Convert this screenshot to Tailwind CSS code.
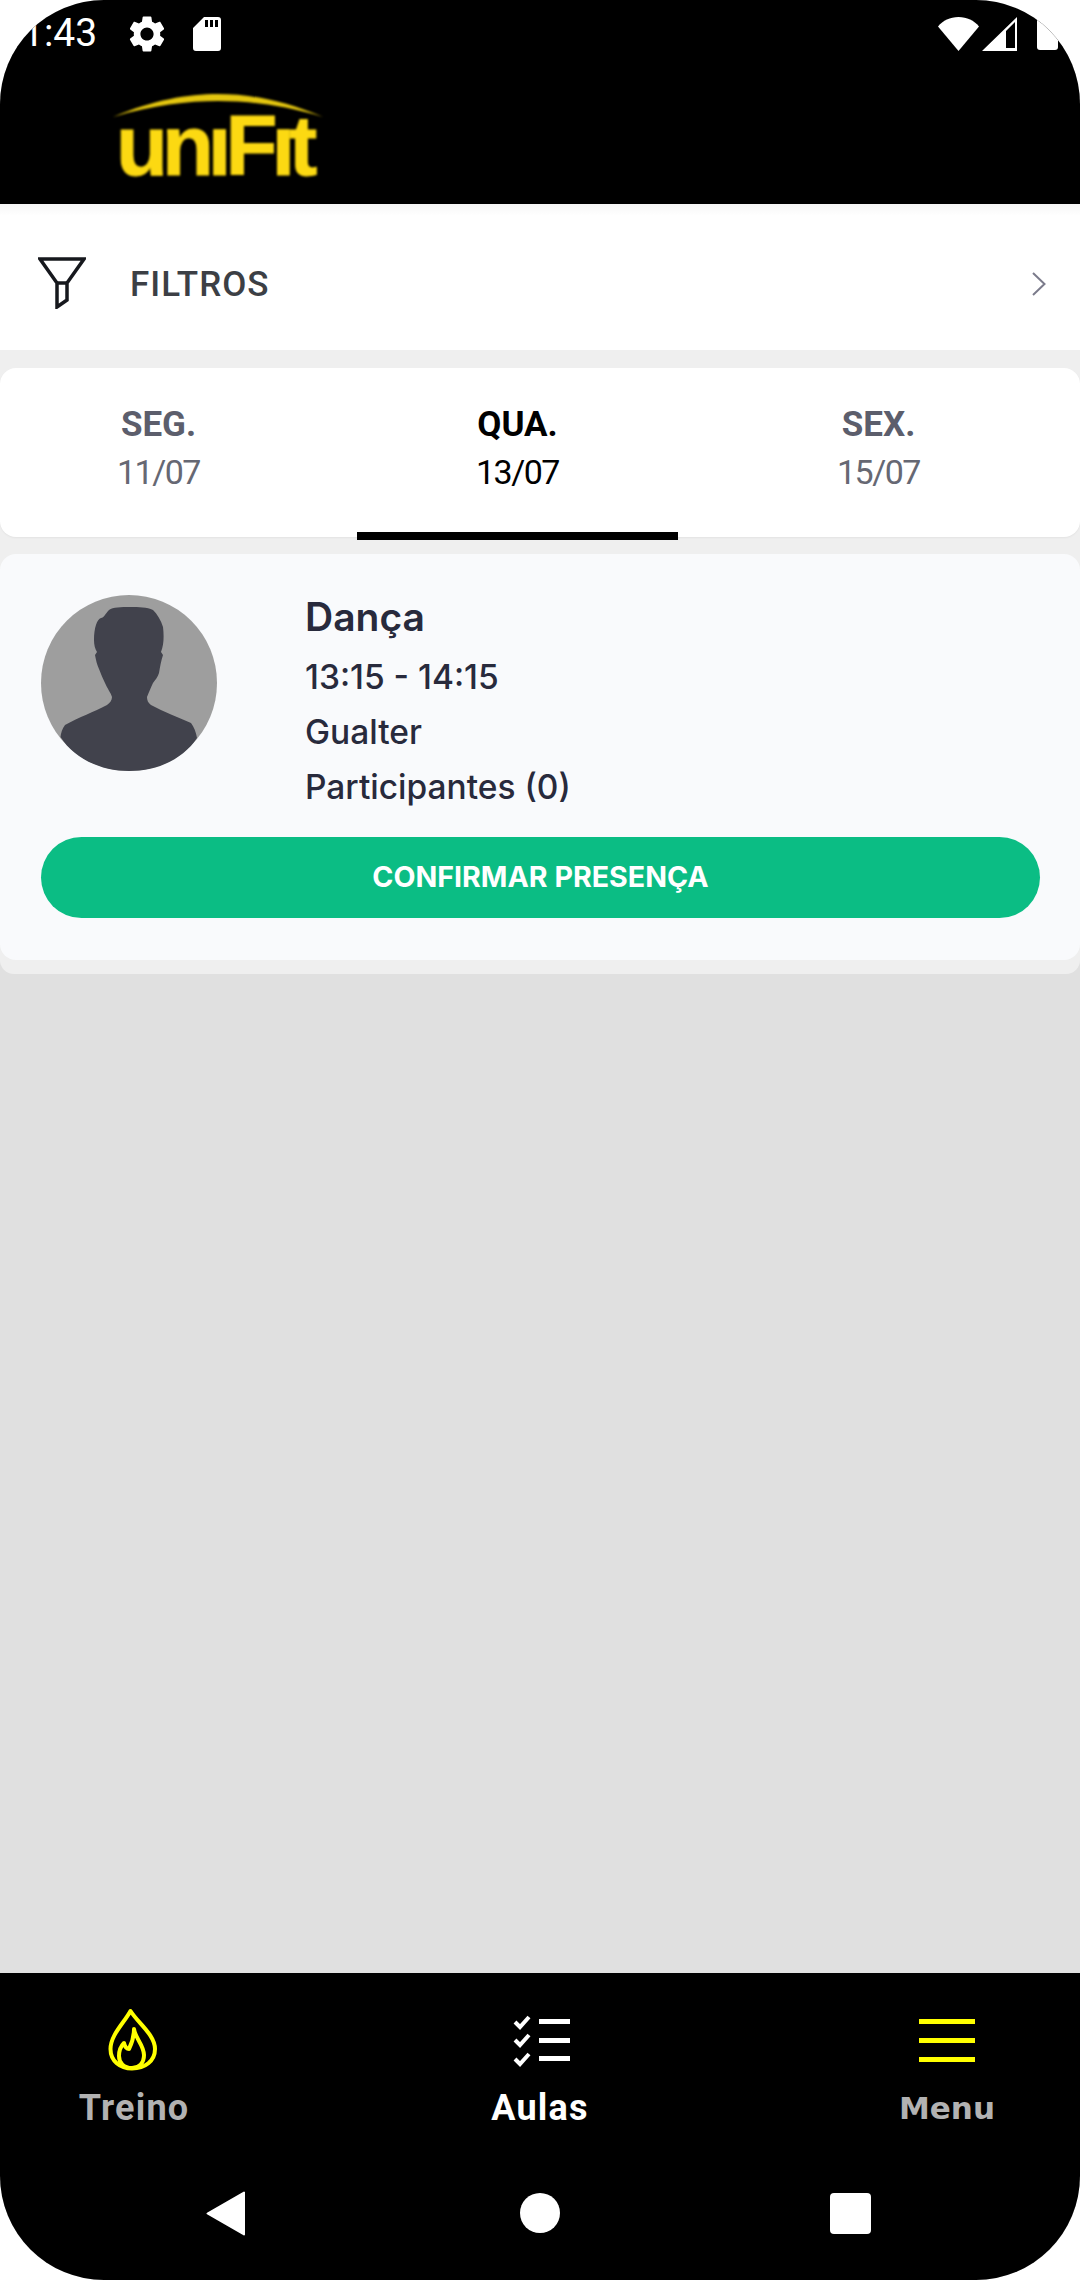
<!DOCTYPE html>
<html><head><meta charset="utf-8"><script src="https://cdn.jsdelivr.net/npm/@tailwindcss/browser@4"></script></head>
<body class="bg-white">
<div class="w-[1080px] h-[2280px] flex flex-col overflow-hidden rounded-[104px] bg-[#e0e0e0] font-['Roboto',sans-serif]">
  <!-- header -->
  <header class="h-[204px] shrink-0 bg-black flex flex-col">
    <div class="h-[67px] flex items-center justify-between pl-[22px] pr-[22px] text-white">
      <div class="flex items-center">
        <span class="text-[39px] leading-none w-[73px] text-right">1:43</span>
        <svg class="w-[44px] h-[44px] ml-[30px]" viewBox="0 0 24 24" fill="#fff"><path d="M19.14 12.94c.04-.3.06-.61.06-.94 0-.32-.02-.64-.07-.94l2.03-1.58c.18-.14.23-.41.12-.61l-1.92-3.32c-.12-.22-.37-.29-.59-.22l-2.39.96c-.5-.38-1.03-.7-1.62-.94l-.36-2.54c-.04-.24-.24-.41-.48-.41h-3.84c-.24 0-.43.17-.47.41l-.36 2.54c-.59.24-1.13.57-1.62.94l-2.39-.96c-.22-.08-.47 0-.59.22L2.74 8.87c-.12.21-.08.47.12.61l2.03 1.58c-.05.3-.09.63-.09.94s.02.64.07.94l-2.03 1.58c-.18.14-.23.41-.12.61l1.92 3.32c.12.22.37.29.59.22l2.39-.96c.5.38 1.03.7 1.62.94l.36 2.54c.05.24.24.41.48.41h3.84c.24 0 .44-.17.47-.41l.36-2.54c.59-.24 1.13-.56 1.62-.94l2.39.96c.22.08.47 0 .59-.22l1.92-3.32c.12-.22.07-.47-.12-.61l-2.01-1.58zM12 15.6c-1.98 0-3.6-1.62-3.6-3.6s1.62-3.6 3.6-3.6 3.6 1.62 3.6 3.6-1.62 3.6-3.6 3.6z"/></svg>
        <svg class="w-[28px] h-[34px] ml-[24px]" viewBox="0 0 28 34"><path fill="#fff" fill-rule="evenodd" d="M11 0H25a3 3 0 0 1 3 3V31a3 3 0 0 1-3 3H3a3 3 0 0 1-3-3V11ZM12 3v7h3V3ZM17 3v7h3V3ZM22 3v7h3V3Z"/></svg>
      </div>
      <div class="flex items-center">
        <svg class="w-[41px] h-[34px]" viewBox="0 0 41 34" fill="#fff"><path d="M0 9.5C5 3.500 12 0 20.500 0S36 3.500 41 9.500L20.500 34Z"/></svg>
        <svg class="w-[35px] h-[34px] ml-[3px]" viewBox="0 0 35 34"><path fill="#fff" fill-rule="evenodd" d="M35 0V34H0ZM33 5 24 14V31H33Z"/></svg>
        <div class="w-[21px] h-[50px] -mt-[17px] ml-[20px] bg-white rounded-b-[3px]"></div>
      </div>
    </div>
    <div class="pl-[113px] pt-[27px]">
      <div class="relative w-[210px] h-[81px] blur-[0.8px]">
        <svg class="absolute left-0 top-0 w-[210px] h-[24px]" viewBox="0 0 210 24"><path fill="#e4c60f" d="M0 23C40 6 75 0 105 0S170 6 210 23C170 11 135 7 105 7S40 11 0 23Z"/></svg>
        <span class="absolute left-[3px] top-[10px] font-['Liberation_Sans',sans-serif] font-bold text-[85px] leading-[84px] tracking-[-6px] text-[#fcd912] [-webkit-text-stroke:1px_#fcd912] whitespace-nowrap">unıFıt</span>
      </div>
    </div>
  </header>

  <!-- filters -->
  <div class="h-[146px] shrink-0 bg-gradient-to-b from-[#f6f6f6] via-white via-[8%] to-white flex items-center pl-[38px] pr-[34px] pt-[14px]">
    <svg class="w-[48px] h-[52px] -mt-[3px]" viewBox="0 0 48 52" fill="none" stroke="#16181d" stroke-width="3.500"><path d="M2 2H46L29 26V43L19 50V26Z"/><path d="M19 26H29"/></svg>
    <span class="ml-[44px] text-[35px] tracking-[1px] font-medium leading-none text-[#3c3f45]">FILTROS</span>
    <svg class="w-[14px] h-[24px] ml-auto" viewBox="0 0 14 24" fill="none" stroke="#7b7b8b" stroke-width="2"><path d="M1 1L12.500 12L1 23"/></svg>
  </div>

  <!-- content -->
  <main class="h-[624px] shrink-0 bg-[#efefef] pt-[18px] rounded-b-[14px]">
    <div class="relative h-[169px] bg-white rounded-[16px] grid grid-cols-[317px_321px_321px] gap-x-[40px] pt-[38px] shadow-[0_1px_2px_rgba(0,0,0,0.05)]">
      <div class="flex flex-col items-center text-[#5c5e6c]">
        <span class="text-[35px] font-bold leading-[38px]">SEG.</span>
        <span class="text-[34px] tracking-[-1.5px] font-normal leading-[38px] mt-[9px] text-[#666873]">11/07</span>
      </div>
      <div class="relative h-[131px] flex flex-col items-center text-black">
        <span class="text-[35px] font-bold leading-[38px]">QUA.</span>
        <span class="text-[34px] tracking-[-1.5px] font-normal leading-[38px] mt-[9px]">13/07</span>
        <div class="absolute left-0 right-0 bottom-[-3px] h-[8px] bg-black"></div>
      </div>
      <div class="flex flex-col items-center text-[#5c5e6c]">
        <span class="text-[35px] font-bold leading-[38px]">SEX.</span>
        <span class="text-[34px] tracking-[-1.5px] font-normal leading-[38px] mt-[9px] text-[#666873]">15/07</span>
      </div>
    </div>

    <div class="mt-[17px] h-[406px] bg-[#f9fafc] rounded-[16px] px-[40px] pt-[41px]">
      <div class="flex pl-[1px]">
        <svg class="w-[176px] h-[176px] shrink-0" viewBox="0 0 176 176"><circle cx="88" cy="88" r="88" fill="#9e9e9e"/><path fill="#41424c" d="M89 12C80 12 72 12 68 15C64 19 63 23 60 23C56 24 53 33 53 45C53 50 54 54 56 57L54 60C55 65 56 70 58 74C60 79 62 84 64 88C66 93 70 98 71 102C71 105 69 108 66 110C53 117 38 122 24 130C21 134 20 138 19.500 142C33 163 59 176 88 176C117 176 142 164 156 143C155 137 153 132 150 128C137 122 123 117 110 110C107 108 106 105 106 102C108 97 110 92 112 88C114 85 117 82 118 78C119 72 120 66 122 60L120 57C123 50 123 40 122 32C120 25 116 19 112 15C106 12 98 12 89 12Z"/></svg>
        <div class="ml-[88px] text-[#282a3c] font-['Inter',sans-serif]">
          <div class="text-[39px] font-semibold leading-[44px]">Dança</div>
          <div class="text-[33.500px] font-medium leading-[40px] mt-[18px]">13:15 - 14:15</div>
          <div class="text-[33.500px] font-medium leading-[40px] mt-[15px]">Gualter</div>
          <div class="text-[33.500px] font-medium leading-[40px] mt-[15px]">Participantes (0)</div>
        </div>
      </div>
      <div class="ml-[1px] mt-[30px] h-[81px] rounded-full bg-[#0bbd84] flex items-center justify-center text-white font-['Inter',sans-serif] font-bold text-[28.600px]">CONFIRMAR PRESENÇA</div>
    </div>
  </main>

  <div class="flex-1"></div>

  <!-- bottom nav -->
  <nav class="h-[307px] shrink-0 bg-black flex flex-col">
    <div class="relative h-[155px]">
      <div class="grid grid-cols-3 h-full">
        <div class="relative flex flex-col items-center">
          <svg class="absolute left-[105px] top-[32px] w-[56px] h-[70px]" viewBox="0 0 56 70" fill="none" stroke="#ffff00" stroke-width="4" stroke-linejoin="round"><path d="M25.500 6C19 18 5.500 30 5.500 44C5.500 56 15 63.500 27 63.500C40 63.500 50 56 50 44C50 30 33 18 25.500 6Z"/><path d="M29 24C30 33 39 40 39 50C39 58 34 63 27 63C19 63 14 58 14 51C14 46 16 41 19 38C20 42 22 44 24 44C27 38 29 31 29 24Z"/></svg>
          <span class="absolute left-0 w-[268px] text-center top-[115px] text-[36px] tracking-[1.2px] font-bold leading-[40px] text-[#b2b2b2]">Treino</span>
        </div>
        <div class="relative">
          <svg class="absolute left-[153px] top-[42px] w-[57px] h-[52px]" viewBox="0 0 57 52" fill="none"><g stroke="#fff" stroke-width="4"><path d="M2 7L7 12L16 2"/><path d="M2 25L7 30L16 20"/><path d="M2 44L7 49L16 39"/></g><g fill="#fff"><rect x="26" y="4" width="31" height="5"/><rect x="26" y="23" width="31" height="5"/><rect x="26" y="41" width="31" height="5"/></g></svg>
          <span class="absolute left-0 right-0 text-center top-[115px] text-[36px] tracking-[1.2px] font-bold leading-[40px] text-white">Aulas</span>
        </div>
        <div class="relative">
          <div class="absolute left-[199px] top-[46px] w-[56px] flex flex-col gap-[14px]">
            <div class="h-[5px] bg-[#ffff00]"></div><div class="h-[5px] bg-[#ffff00]"></div><div class="h-[5px] bg-[#ffff00]"></div>
          </div>
          <span class="absolute left-[147px] w-[160px] text-center top-[115px] font-['DejaVu_Sans',sans-serif] text-[31px] font-bold leading-[40px] text-[#b2b2b2]">Menu</span>
        </div>
      </div>
    </div>
    <div class="flex items-center h-[46px] mt-[62px] pl-[206px]">
      <svg class="w-[39px] h-[45px]" viewBox="0 0 39 45"><path fill="#fff" stroke="#fff" stroke-width="2" stroke-linejoin="round" d="M38 1.500V43.500L1.500 22.500Z"/></svg>
      <div class="w-[40px] h-[40px] ml-[275px] rounded-full bg-white"></div>
      <div class="w-[41px] h-[41px] ml-[270px] rounded-[4px] bg-white"></div>
    </div>
  </nav>
</div>
</body></html>
